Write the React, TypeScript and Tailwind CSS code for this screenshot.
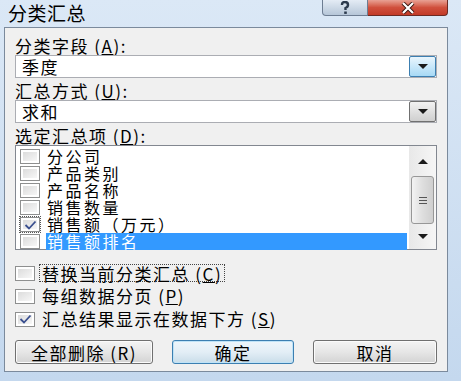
import React from 'react';

const FONT = { fontFamily: '"Noto Sans CJK SC", "Noto Sans", sans-serif' };

const ITEMS = [
  { label: '分公司', checked: false },
  { label: '产品类别', checked: false },
  { label: '产品名称', checked: false },
  { label: '销售数量', checked: false },
  { label: '销售额（万元）', checked: true, focus: true },
  { label: '销售额排名', checked: false, selected: true },
];

function Check({ checked }: { checked: boolean }) {
  return (
    <div className="w-[20px] h-[15px] border border-[#8e8f8f] bg-white p-[2px] flex-none">
      <div className="w-full h-full bg-gradient-to-br from-[#dcdcdc] to-[#f7f7f7] flex items-center justify-center">
        {checked && (
          <svg width="13" height="10" viewBox="0 0 13 10">
            <path d="M1.5 5 L5 8.5 L11.5 1.5" fill="none" stroke="#3a4f8f" strokeWidth="1.8" />
          </svg>
        )}
      </div>
    </div>
  );
}

function Arrow({ up = false }: { up?: boolean }) {
  return (
    <svg width="10" height="5" viewBox="0 0 10 5">
      <path d={up ? 'M0 5 L5 0 L10 5 Z' : 'M0 0 L10 0 L5 5 Z'} fill="#1a1a1a" />
    </svg>
  );
}

function Combo({ value, hot }: { value: string; hot?: boolean }) {
  return (
    <div className="flex items-stretch h-[23px] w-[422px] border border-[#abadb3] bg-white">
      <div className="flex-1 pl-[6px] text-[17px] leading-[21px] tracking-[1.5px] text-black">{value}</div>
      <div
        className={`w-[27px] flex items-center justify-center border rounded-[2px] ${
          hot
            ? 'border-[#3c7fb1] bg-gradient-to-b from-[#eaf6fd] to-[#a7d9f5]'
            : 'border-[#707070] bg-gradient-to-b from-[#f2f2f2] to-[#cfcfcf]'
        }`}
      >
        <Arrow />
      </div>
    </div>
  );
}

function Btn({ label, primary, w }: { label: string; primary?: boolean; w: string }) {
  return (
    <div
      className={`${w} h-[24px] rounded-[3px] border flex items-center justify-center text-[17px] leading-none tracking-[1.5px] text-black ${
        primary
          ? 'border-[#3c7fb1] bg-gradient-to-b from-[#eef6fb] via-[#e3eef6] to-[#c9dde9] shadow-[inset_0_0_0_1px_#bfe3f7]'
          : 'border-[#707070] bg-gradient-to-b from-[#f4f4f4] via-[#e6e6e6] to-[#d3d3d3] shadow-[inset_0_0_0_1px_#fbfbfb]'
      }`}
    >
      {label}
    </div>
  );
}

export default function App() {
  return (
    <div
      className="w-[461px] h-[381px] bg-gradient-to-b from-[#dbe8f6] to-[#c4d8ee] flex flex-col overflow-hidden"
      style={FONT}
    >
      {/* Title bar */}
      <div className="h-[27px] flex items-start">
        <div className="pl-[8px] pt-[2px] text-[19px] leading-[22px] tracking-[0.5px] text-black">分类汇总</div>
        <div className="ml-auto mr-[13px] flex">
          <div className="w-[46px] h-[16px] rounded-bl-[4px] border border-[#6d7d92] border-t-0 bg-gradient-to-b from-[#e4ecf5] to-[#b6c6d8] flex items-center justify-center">
            <svg width="12" height="13" viewBox="0 0 12 13">
              <path d="M3 4 Q3 1 6 1 Q9 1 9 4 Q9 6 6.5 7 L6.5 9" fill="none" stroke="#2b3a4d" strokeWidth="2.4" />
              <rect x="5.2" y="10.5" width="2.6" height="2.4" fill="#2b3a4d" />
            </svg>
          </div>
          <div className="w-[80px] h-[16px] rounded-br-[4px] border border-[#6b2b24] border-t-0 border-l-0 bg-gradient-to-b from-[#e8a194] via-[#d0503d] to-[#c23a27] flex items-center justify-center">
            <svg width="16" height="12" viewBox="0 0 16 12">
              <path d="M3 1 L13 11 M13 1 L3 11" stroke="#3b1712" strokeWidth="4" />
              <path d="M3 1 L13 11 M13 1 L3 11" stroke="#ffffff" strokeWidth="2.2" />
            </svg>
          </div>
        </div>
      </div>

      {/* Client area */}
      <div className="ml-[4px] mr-[13px] h-[345px] border border-[#7b8a9c] bg-[#f0f0f0] pl-[10px] flex flex-col text-black">
        <div className="mt-[8px] h-[19px] text-[17px] leading-[19px] tracking-[1.5px]">分类字段 (<span className="underline">A</span>):</div>
        <Combo value="季度" hot />
        <div className="mt-[3px] h-[19px] text-[17px] leading-[19px] tracking-[1.5px]">汇总方式 (<span className="underline">U</span>):</div>
        <Combo value="求和" />
        <div className="mt-[3px] h-[19px] text-[17px] leading-[19px] tracking-[1.5px]">选定汇总项 (<span className="underline">D</span>):</div>

        {/* List box */}
        <div className="w-[422px] h-[105px] border border-[#828790] bg-white flex">
          <div className="flex-1 flex flex-col pt-[2px] pl-[4px]">
            {ITEMS.map((it) => (
              <div key={it.label} className="h-[17px] flex items-center">
                <div className={it.focus ? 'outline outline-1 outline-dotted outline-[#555]' : ''}>
                  <Check checked={it.checked} />
                </div>
                <div
                  className={`ml-[6px] h-[17px] text-[16px] leading-[17px] tracking-[2.5px] pl-[1px] ${
                    it.selected ? 'bg-[#3399ff] text-white flex-1 mr-[2px]' : 'text-black'
                  }`}
                >
                  {it.label}
                </div>
              </div>
            ))}
          </div>
          {/* Scrollbar */}
          <div className="w-[27px] bg-gradient-to-r from-[#e8e8e8] to-[#f6f6f6] flex flex-col items-center">
            <div className="h-[30px] flex items-center justify-center">
              <Arrow up />
            </div>
            <div className="w-[23px] h-[48px] rounded-[3px] border border-[#979797] bg-gradient-to-r from-[#f3f3f3] via-[#dedede] to-[#cfcfcf] flex flex-col items-center justify-center gap-[2px]">
              <div className="w-[8px] h-[1px] bg-[#555]" />
              <div className="w-[8px] h-[1px] bg-[#555]" />
              <div className="w-[8px] h-[1px] bg-[#555]" />
            </div>
            <div className="flex-1 flex items-center justify-center">
              <Arrow />
            </div>
          </div>
        </div>

        {/* Options */}
        <div className="mt-[14px] flex flex-col gap-[5px]">
          <div className="h-[18px] flex items-center">
            <Check checked={false} />
            <div className="ml-[4px] px-[2px] h-[18px] text-[17px] leading-[17px] tracking-[1.5px] border border-dotted border-[#444]">
              替换当前分类汇总 (<span className="underline">C</span>)
            </div>
          </div>
          <div className="h-[18px] flex items-center">
            <Check checked={false} />
            <div className="ml-[7px] text-[17px] leading-[18px] tracking-[1.5px]">
              每组数据分页 (<span className="underline">P</span>)
            </div>
          </div>
          <div className="h-[18px] flex items-center">
            <Check checked />
            <div className="ml-[7px] text-[17px] leading-[18px] tracking-[1.5px]">
              汇总结果显示在数据下方 (<span className="underline">S</span>)
            </div>
          </div>
        </div>

        {/* Buttons */}
        <div className="mt-[12px] flex w-[422px] justify-between">
          <Btn w="w-[138px]" label="全部删除 (R)" />
          <Btn w="w-[122px]" label="确定" primary />
          <Btn w="w-[124px]" label="取消" />
        </div>
      </div>
    </div>
  );
}
